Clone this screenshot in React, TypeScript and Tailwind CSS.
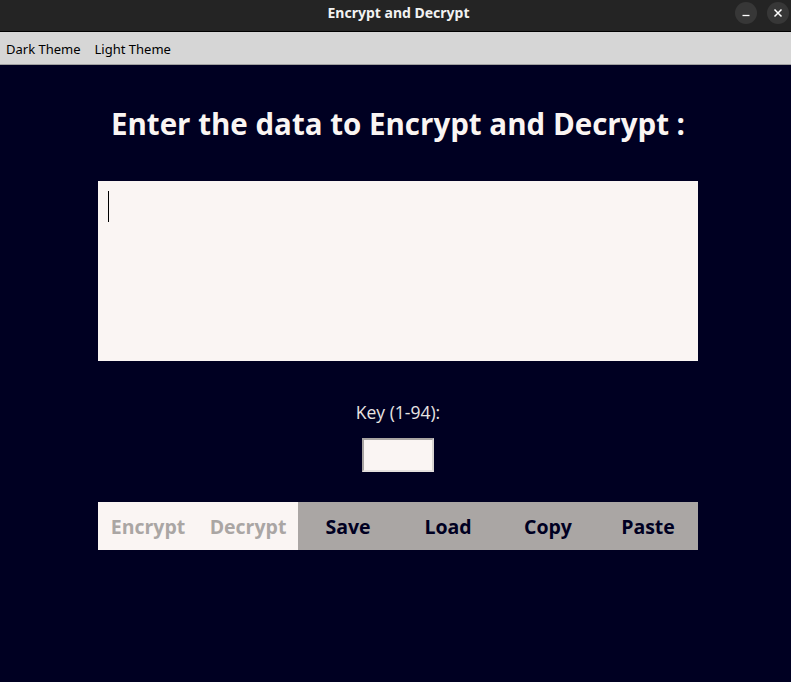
import { useState } from 'react';

export default function App() {
  const [text, setText] = useState('');
  const [key, setKey] = useState('');

  const font = { fontFamily: '"Open Sans", "Noto Sans", sans-serif' };

  return (
    <div className="w-[791px] h-[682px] flex flex-col bg-[#000022] overflow-hidden" style={font}>
      {/* Title bar */}
      <div className="h-[32px] shrink-0 bg-[#242424] flex justify-center pl-[6px] relative border-b border-black">
        <span className="mt-[3px] text-[14px] leading-[20px] font-bold text-[#f2f2f2]" style={{ fontFamily: '"Noto Sans", sans-serif' }}>
          Encrypt and Decrypt
        </span>
        <div className="absolute right-[2px] top-[2px] flex gap-[10px]">
          <button className="w-[22px] h-[22px] rounded-full bg-[#373737] flex items-center justify-center">
            <svg width="10" height="10" viewBox="0 0 10 10">
              <path d="M1.5 7.5h7" stroke="white" strokeWidth="1.3" />
            </svg>
          </button>
          <button className="w-[22px] h-[22px] rounded-full bg-[#373737] flex items-center justify-center">
            <svg width="10" height="10" viewBox="0 0 10 10">
              <path d="M1.5 1.5l7 7M8.5 1.5l-7 7" stroke="white" strokeWidth="1.5" />
            </svg>
          </button>
        </div>
      </div>

      {/* Menu */}
      <div className="h-[33px] shrink-0 bg-[#d6d6d6] border-b border-[#a0a0a0] flex items-center gap-[14px] px-[6px] pt-[3px] text-[13px] text-black" style={{ fontFamily: '"Noto Sans", sans-serif' }}>
        <span>Dark Theme</span>
        <span>Light Theme</span>
      </div>

      {/* Content */}
      <div className="flex flex-col items-center pl-[5px]">
        <h1 className="mt-[39px] text-[29.5px] leading-[40px] font-bold text-[#faf5f3]">
          Enter the data to Encrypt and Decrypt :
        </h1>

        <div className="relative mt-[37px]">
          <textarea
            value={text}
            onChange={(e) => setText(e.target.value)}
            className="block w-[600px] h-[180px] bg-[#faf5f3] outline-none resize-none px-[10px] py-[8px] text-[16px] text-black caret-black"
          />
          {text === '' && <span className="absolute left-[10px] top-[10px] w-px h-[31px] bg-black pointer-events-none" />}
        </div>

        <div className="mt-[39px] text-[17.5px] leading-[24px] text-[#e8e4e2]">Key (1-94):</div>

        <input
          value={key}
          onChange={(e) => setKey(e.target.value)}
          className="mt-[14px] w-[72px] h-[34px] bg-[#faf5f3] border-2 border-t-[#a8a4a2] border-l-[#a8a4a2] border-r-[#d8d4d2] border-b-[#e4e0de] outline-none px-1 text-[15px]"
        />

        <div className="mt-[30px] w-[600px] h-[48px] flex text-[19.5px] font-bold">
          <button className="w-[100px] pt-[1px] bg-[#faf5f3] text-[#aaa6a4]">Encrypt</button>
          <button className="w-[100px] pt-[1px] bg-[#faf5f3] text-[#aaa6a4]">Decrypt</button>
          <button className="w-[100px] pt-[1px] bg-[#aaa6a4] text-[#000022]">Save</button>
          <button className="w-[100px] pt-[1px] bg-[#aaa6a4] text-[#000022]">Load</button>
          <button className="w-[100px] pt-[1px] bg-[#aaa6a4] text-[#000022]">Copy</button>
          <button className="w-[100px] pt-[1px] bg-[#aaa6a4] text-[#000022]">Paste</button>
        </div>
      </div>
    </div>
  );
}
